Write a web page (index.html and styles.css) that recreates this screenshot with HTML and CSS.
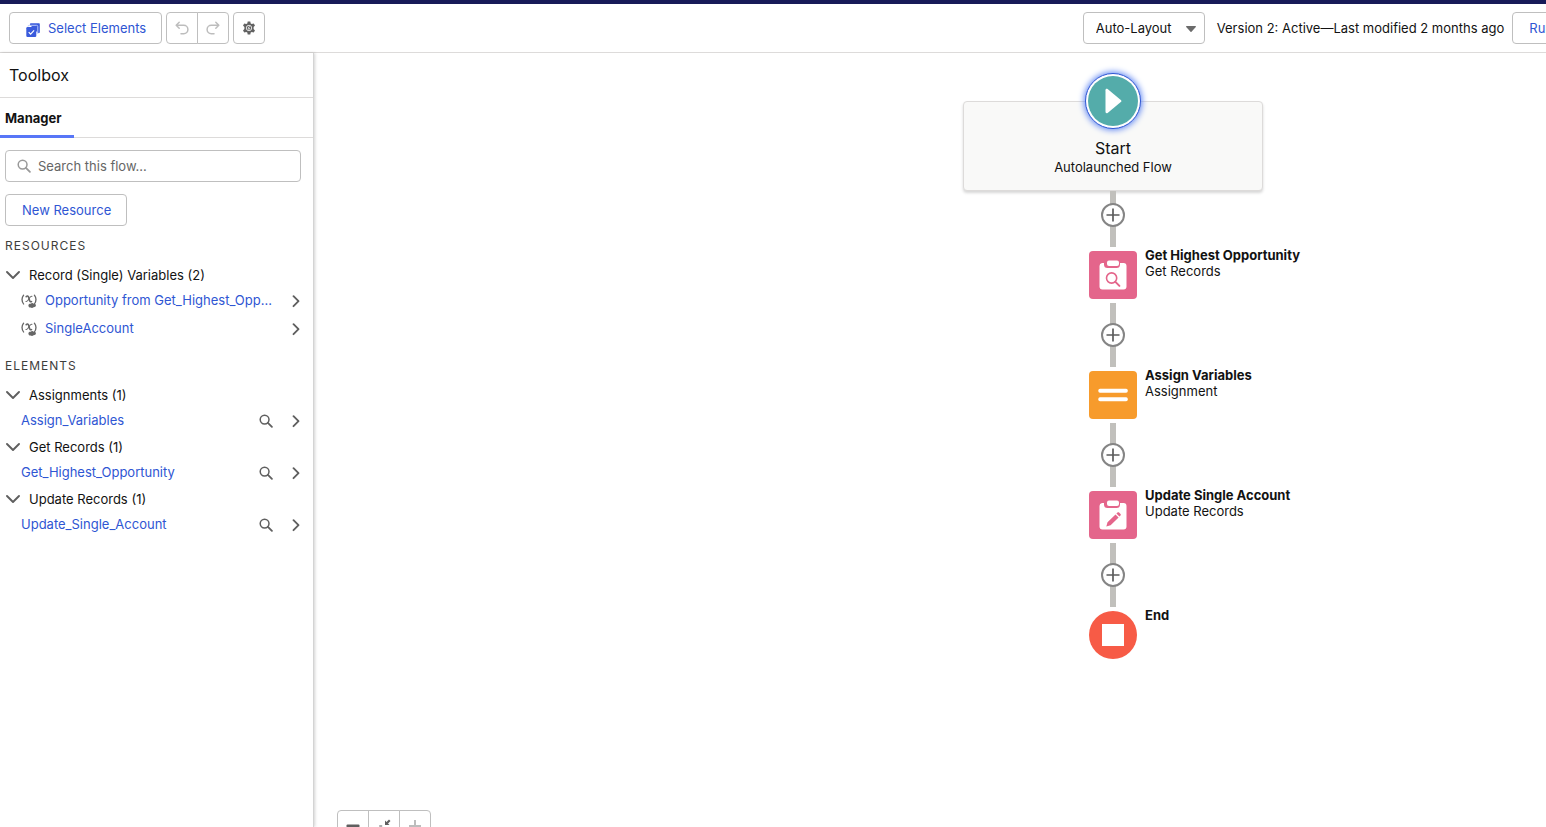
FILE: index.html
```html
<!DOCTYPE html>
<html lang="en">
<head>
<meta charset="utf-8">
<title>Flow Builder</title>
<link rel="stylesheet" href="styles.css">
</head>
<body>
<svg class="defs" aria-hidden="true">
  <symbol id="chevron-down" viewBox="0 0 14 14"><path d="M1 4l6 6 6-6" fill="none" stroke="currentColor" stroke-width="1.9" stroke-linecap="round" stroke-linejoin="round"/></symbol>
  <symbol id="chevron-right" viewBox="0 0 14 14"><path d="M4.500 2.200l5 5-5 5" fill="none" stroke="currentColor" stroke-width="1.900" stroke-linecap="round" stroke-linejoin="round"/></symbol>
  <symbol id="search" viewBox="0 0 14 14"><circle cx="5.600" cy="5.600" r="4.400" fill="none" stroke="currentColor" stroke-width="1.500"/><path d="M8.900 8.900l4 4" stroke="currentColor" stroke-width="1.800" stroke-linecap="round"/></symbol>
  <symbol id="undo" viewBox="0 0 14 14"><path d="M4.200 1.300L1.200 4.300l3 3M1.400 4.300h7.300a4.200 4.200 0 0 1 0 8.400H6" fill="none" stroke="currentColor" stroke-width="1.500" stroke-linecap="round" stroke-linejoin="round"/></symbol>
  <symbol id="variable" viewBox="0 0 16 16">
    <path d="M2.600 2.200C.8 4.600.8 8.400 2.600 11M13.400 2.200c1.800 2.400 1.800 6.200 0 8.800" fill="none" stroke="currentColor" stroke-width="1.300" stroke-linecap="round"/>
    <path d="M5.200 3.600c1-.9 1.900-.7 2.300.3l1.300 4c.3.900.9 1.100 1.700.7" fill="none" stroke="currentColor" stroke-width="1.600" stroke-linecap="round"/>
    <path d="M10.900 3.300c-1.200-.3-2 .9-2.900 2.500s-1.700 3.200-3 2.700" fill="none" stroke="currentColor" stroke-width="1.100" stroke-linecap="round"/>
    <path d="M7.400 12.400c0-1.400 1.200-1.900 2.300-1.700.7-.9 2.300-.9 3 0 1.400-.3 2.400.6 2.200 1.900-.1 1.200-1.300 1.700-2.400 1.600-.7 1-2.100 1-2.800.3-1.300.2-2.300-.8-2.300-2.100z" fill="currentColor"/>
  </symbol>
  <symbol id="clipboard" viewBox="0 0 48 48">
    <path d="M13 12h2v1.500A3.500 3.500 0 0 0 18.500 17h9a3.500 3.500 0 0 0 3.500-3.500V12h3.500a3 3 0 0 1 3 3v20.500a3 3 0 0 1-3 3h-21a3 3 0 0 1-3-3V15a3 3 0 0 1 2.500-3z" fill="#fff"/>
    <path d="M20 9.500h8a2 2 0 0 1 2 2V13a2 2 0 0 1-2 2h-8a2 2 0 0 1-2-2v-1.500a2 2 0 0 1 2-2z" fill="#fff"/>
  </symbol>
</svg>
<div class="app">
  <div class="global-bar"></div>
  <header class="toolbar">
    <div class="tools">
      <button class="btn btn-select" type="button">
        <svg class="icon-copy" viewBox="0 0 14 14" aria-hidden="true"><path d="M4 2V1.200C4 .6 4.400.2 5 .2h7.800c.6 0 1 .4 1 1V9c0 .6-.4 1-1 1H12" fill="#3a5bdc"/><path d="M2 3.500c0-.7.400-1.200 1.200-1.200h7.400c.8 0 1.200.5 1.200 1.200V11" fill="none" stroke="#b9c9fa" stroke-width="1"/><rect x="0.300" y="4" width="10" height="10" rx="1.200" fill="#3a5bdc"/><path d="M2.700 9.200l1.900 1.900 3.500-3.800" fill="none" stroke="#fff" stroke-width="1.200"/></svg>
        <span>Select Elements</span>
      </button>
      <div class="btn-group">
        <button class="btn btn-icon is-disabled" type="button" aria-label="Undo"><svg class="icon" aria-hidden="true"><use href="#undo"/></svg></button>
        <button class="btn btn-icon is-disabled" type="button" aria-label="Redo"><svg class="icon flip" aria-hidden="true"><use href="#undo"/></svg></button>
      </div>
      <button class="btn btn-icon" type="button" aria-label="Settings">
        <svg class="icon" viewBox="0 0 14 14" aria-hidden="true"><path d="M5.700.5h2.600l.4 1.900 1.100.6 1.900-.6 1.300 2.200L11.600 6v2l1.400 1.400-1.300 2.200-1.900-.6-1.100.6-.4 1.900H5.700l-.4-1.900-1.100-.6-1.900.6L1 9.400 2.400 8V6L1 4.600l1.300-2.200 1.900.6 1.100-.6z" fill="#626262"/><circle cx="7" cy="7" r="2.700" fill="none" stroke="#fff" stroke-width=".8"/><path d="M7.600 5.200L6 7.300h1.800L6.600 9" fill="none" stroke="#fff" stroke-width=".7"/></svg>
      </button>
    </div>
    <div class="status">
      <div class="select-wrap">
        <select class="layout-select" aria-label="Layout mode"><option>Auto-Layout</option></select>
        <svg class="select-arrow" viewBox="0 0 10 6" aria-hidden="true"><path d="M.6 0h8.800c.5 0 .7.500.4.900L5.500 5.700c-.3.300-.7.300-1 0L.2.900C-.1.500.1 0 .6 0z" fill="#6b6b6b"/></svg>
      </div>
      <span class="version">Version 2: Active—Last modified 2 months ago</span>
      <button class="btn btn-run" type="button">Run</button>
    </div>
  </header>
  <div class="workspace">
    <aside class="toolbox">
      <h2 class="toolbox-title">Toolbox</h2>
      <nav class="tabs"><button class="tab" type="button">Manager</button></nav>
      <div class="panel">
        <label class="search">
          <svg class="icon" aria-hidden="true"><use href="#search"/></svg>
          <input type="search" placeholder="Search this flow..." aria-label="Search this flow">
        </label>
        <button class="btn btn-new" type="button">New Resource</button>
        <section class="section">
          <h3 class="caps">Resources</h3>
          <button class="group" type="button"><svg class="icon" aria-hidden="true"><use href="#chevron-down"/></svg><span>Record (Single) Variables (2)</span></button>
          <div class="row">
            <svg class="icon-var" aria-hidden="true"><use href="#variable"/></svg>
            <a class="link" href="#">Opportunity from Get_Highest_Opp...</a>
            <button class="row-btn" type="button" aria-label="Open details"><svg class="icon" aria-hidden="true"><use href="#chevron-right"/></svg></button>
          </div>
          <div class="row">
            <svg class="icon-var" aria-hidden="true"><use href="#variable"/></svg>
            <a class="link" href="#">SingleAccount</a>
            <button class="row-btn" type="button" aria-label="Open details"><svg class="icon" aria-hidden="true"><use href="#chevron-right"/></svg></button>
          </div>
        </section>
        <section class="section">
          <h3 class="caps">Elements</h3>
          <button class="group" type="button"><svg class="icon" aria-hidden="true"><use href="#chevron-down"/></svg><span>Assignments (1)</span></button>
          <div class="row">
            <a class="link" href="#">Assign_Variables</a>
            <button class="row-btn" type="button" aria-label="Locate"><svg class="icon" aria-hidden="true"><use href="#search"/></svg></button>
            <button class="row-btn" type="button" aria-label="Open details"><svg class="icon" aria-hidden="true"><use href="#chevron-right"/></svg></button>
          </div>
          <button class="group" type="button"><svg class="icon" aria-hidden="true"><use href="#chevron-down"/></svg><span>Get Records (1)</span></button>
          <div class="row">
            <a class="link" href="#">Get_Highest_Opportunity</a>
            <button class="row-btn" type="button" aria-label="Locate"><svg class="icon" aria-hidden="true"><use href="#search"/></svg></button>
            <button class="row-btn" type="button" aria-label="Open details"><svg class="icon" aria-hidden="true"><use href="#chevron-right"/></svg></button>
          </div>
          <button class="group" type="button"><svg class="icon" aria-hidden="true"><use href="#chevron-down"/></svg><span>Update Records (1)</span></button>
          <div class="row">
            <a class="link" href="#">Update_Single_Account</a>
            <button class="row-btn" type="button" aria-label="Locate"><svg class="icon" aria-hidden="true"><use href="#search"/></svg></button>
            <button class="row-btn" type="button" aria-label="Open details"><svg class="icon" aria-hidden="true"><use href="#chevron-right"/></svg></button>
          </div>
        </section>
      </div>
    </aside>
    <main class="canvas">
      <div class="flow">
        <div class="start">
          <button class="start-icon" type="button" aria-label="Start"><svg viewBox="0 0 50 50" aria-hidden="true"><path d="M17.500 14.200c0-1.300 1.100-1.900 2.100-1.100l13.200 10.800c.8.700.8 1.500 0 2.200L19.600 36.900c-1 .8-2.100.2-2.100-1.100z" fill="#fff"/></svg></button>
          <div class="start-title">Start</div>
          <div class="start-type">Autolaunched Flow</div>
        </div>
        <div class="connector first"><button class="add" type="button" aria-label="Add element"><svg viewBox="0 0 20 20" aria-hidden="true"><path d="M10 3.500v13M3.500 10h13" stroke="#5c5c5c" stroke-width="1.700"/></svg></button></div>
        <div class="node">
          <svg class="node-icon pink" viewBox="0 0 48 48" aria-hidden="true"><use href="#clipboard"/><circle cx="22.600" cy="27" r="5.100" fill="none" stroke="#e4658b" stroke-width="1.600"/><path d="M26.400 30.900l4 4" stroke="#e4658b" stroke-width="2" stroke-linecap="round"/></svg>
          <div class="node-text"><strong>Get Highest Opportunity</strong><span>Get Records</span></div>
        </div>
        <div class="connector"><button class="add" type="button" aria-label="Add element"><svg viewBox="0 0 20 20" aria-hidden="true"><path d="M10 3.500v13M3.500 10h13" stroke="#5c5c5c" stroke-width="1.700"/></svg></button></div>
        <div class="node">
          <svg class="node-icon orange" viewBox="0 0 48 48" aria-hidden="true"><rect x="9.300" y="17.800" width="29.500" height="4" rx="1.700" fill="#fff"/><rect x="9.300" y="26.200" width="29.500" height="4" rx="1.700" fill="#fff"/></svg>
          <div class="node-text"><strong>Assign Variables</strong><span>Assignment</span></div>
        </div>
        <div class="connector"><button class="add" type="button" aria-label="Add element"><svg viewBox="0 0 20 20" aria-hidden="true"><path d="M10 3.500v13M3.500 10h13" stroke="#5c5c5c" stroke-width="1.700"/></svg></button></div>
        <div class="node">
          <svg class="node-icon pink" viewBox="0 0 48 48" aria-hidden="true"><use href="#clipboard"/><path d="M17.300 35.500l1.200-4.300 8-7.700 3.100 3.100-8 7.700zM27.400 22.600l1.100-1.100c.5-.5 1.100-.5 1.600 0l1.400 1.400c.5.500.5 1.100 0 1.600l-1.100 1.100z" fill="#e4658b"/></svg>
          <div class="node-text"><strong>Update Single Account</strong><span>Update Records</span></div>
        </div>
        <div class="connector"><button class="add" type="button" aria-label="Add element"><svg viewBox="0 0 20 20" aria-hidden="true"><path d="M10 3.500v13M3.500 10h13" stroke="#5c5c5c" stroke-width="1.700"/></svg></button></div>
        <div class="node">
          <svg class="node-icon end" viewBox="0 0 48 48" aria-hidden="true"><rect x="13" y="13" width="22" height="22" fill="#fff"/></svg>
          <div class="node-text"><strong>End</strong></div>
        </div>
      </div>
      <div class="zoom btn-group">
        <button class="btn btn-icon" type="button" aria-label="Zoom out"><svg class="icon" viewBox="0 0 14 14" aria-hidden="true"><rect x="0.500" y="5.500" width="13" height="3" rx="1" fill="#5f5f5f"/></svg></button>
        <button class="btn btn-icon" type="button" aria-label="Zoom to fit"><svg class="icon" viewBox="0 0 14 14" aria-hidden="true"><path d="M8 1.500V6h4.500L11 4.500l2.500-2.500L12 .5 9.500 3zM6 12.500V8H1.500L3 9.500.5 12 2 13.500 4.500 11zM2.200 6.500h3v1h-3z" fill="#5f5f5f"/></svg></button>
        <button class="btn btn-icon is-disabled" type="button" aria-label="Zoom in"><svg class="icon" viewBox="0 0 14 14" aria-hidden="true"><path d="M7 1v12M1 7h12" stroke="currentColor" stroke-width="2"/></svg></button>
      </div>
    </main>
  </div>
</div>
</body>
</html>
```

FILE: styles.css
```css
* { box-sizing: border-box; }
body { margin: 0; font: 13px/20px Inter, "Liberation Sans", sans-serif; color: #121212; background: #fff; }
button, input, select { font: inherit; color: inherit; margin: 0; }
button { cursor: pointer; }
h2, h3 { margin: 0; font-weight: 400; }
.defs { position: absolute; width: 0; height: 0; }
.app { display: flex; flex-direction: column; height: 100vh; overflow: hidden; }
.global-bar { flex: none; height: 4px; background: #171a58; }
.toolbar { flex: none; display: flex; justify-content: space-between; padding: 8px 0 8px 9px; border-bottom: 1px solid #dddbda; overflow: hidden; }
.tools, .status { display: flex; align-items: center; gap: 4px; }
.btn { display: flex; align-items: center; justify-content: center; height: 32px; padding: 0 15px 0 16px; border: 1px solid #bfbfbf; border-radius: 4px; background: #fff; color: #2f56d3; }
.btn-select { gap: 8px; }
.icon-copy { width: 14px; height: 14px; margin-top: 3px; }
.btn-icon { width: 32px; padding: 0; color: #666; }
.is-disabled { color: #bdbdbd; }
.btn-group { display: flex; }
.btn-group .btn + .btn { margin-left: -1px; border-top-left-radius: 0; border-bottom-left-radius: 0; }
.btn-group .btn:not(:last-child) { border-top-right-radius: 0; border-bottom-right-radius: 0; }
.icon { flex: none; width: 14px; height: 14px; }
.flip { transform: scaleX(-1); }
.status { gap: 12px; white-space: nowrap; }
.select-wrap { position: relative; }
.layout-select { display: block; appearance: none; height: 32px; padding: 0 32px 0 12px; border: 1px solid #bfbfbf; border-radius: 4px; background: #fff; }
.select-arrow { position: absolute; right: 9px; top: 14px; width: 10px; height: 6px; pointer-events: none; }
.btn-run { margin: 0 -23px 0 -4px; }

.workspace { flex: 1; display: flex; min-height: 0; }
.toolbox { flex: none; width: 314px; border-right: 1px solid #d4d4d4; box-shadow: 1px 0 3px rgba(0, 0, 0, .18); }
.toolbox-title { padding: 12px 9px; font-size: 16px; line-height: 20px; border-bottom: 1px solid #dddbda; }
.tabs { border-bottom: 1px solid #dddbda; }
.tab { display: block; height: 40px; margin-bottom: -1px; padding: 2px 12px 0 5px; border: 0; border-bottom: 3px solid #5876f7; background: none; font-weight: 700; }
.panel { padding: 12px 12px 0 5px; }
.search { display: flex; align-items: center; gap: 7px; height: 32px; padding: 0 11px; border: 1px solid #bfbfbf; border-radius: 4px; color: #999; }
.search input { flex: 1; min-width: 0; padding: 0; border: 0; outline: 0; background: none; color: #181818; }
.search input::placeholder { color: #666; opacity: 1; }
.btn-new { margin: 12px 0 11px; }
.section { margin-bottom: 14px; }
.caps { margin-bottom: 8px; font-size: 12px; line-height: 18px; letter-spacing: 1px; text-transform: uppercase; color: #3e3e3c; }
.group { display: flex; align-items: center; gap: 9px; height: 24px; width: 100%; padding: 0 1px; border: 0; background: none; text-align: left; }
.group .icon { color: #5f5f5f; }
.row { display: flex; align-items: center; height: 28px; margin-right: -2px; padding-left: 16px; }
.icon-var { flex: none; width: 16px; height: 16px; margin-right: 8px; color: #666; }
.link { flex: 0 1 auto; min-width: 0; padding-bottom: 2px; overflow: hidden; text-overflow: ellipsis; white-space: nowrap; color: #2f56d3; text-decoration: none; }
.row-btn { display: flex; flex: none; margin-left: 16px; padding: 0; border: 0; background: none; color: #5f5f5f; }
.link + .row-btn { margin-left: auto; }

.canvas { flex: 1; position: relative; min-width: 0; overflow: hidden; z-index: -1; }
.flow { position: absolute; top: 48px; left: 649px; width: 300px; display: flex; flex-direction: column; align-items: center; }
.start { width: 100%; height: 90px; border: 1px solid #dddbda; border-radius: 4px; background: #f9f9f8; box-shadow: 0 2px 3px rgba(0, 0, 0, .16); display: flex; flex-direction: column; align-items: center; }
.start-icon { flex: none; width: 56px; height: 56px; margin-top: -29px; padding: 2px; border: 1px solid #2f56d3; border-radius: 50%; background: #fff; box-shadow: 0 0 6px 1px #5b83f2; }
.start-icon svg { display: block; border-radius: 50%; background: #54acaa; }
.start-title { margin-top: 9px; font-size: 16px; line-height: 20px; }
.start-type { line-height: 18px; }
.connector { display: flex; align-items: center; justify-content: center; width: 6px; height: 64px; background: #c1c0bc; }
.connector.first { height: 56px; padding-bottom: 8px; }
.add { flex: none; width: 24px; height: 24px; padding: 0; border: 2px solid #858585; border-radius: 50%; background: #fff; }
.add svg { display: block; width: 20px; height: 20px; }
.node { display: flex; gap: 8px; width: 48px; height: 56px; padding: 4px 0; }
.node-icon { flex: none; width: 48px; height: 48px; border-radius: 4px; }
.pink { background: #e4658b; }
.orange { background: #f79b2c; }
.end { background: #f75b46; border-radius: 50%; }
.node-text { display: flex; flex-direction: column; margin-top: -4px; line-height: 16px; white-space: nowrap; }
.zoom { position: absolute; left: 23px; bottom: -15px; }
```
